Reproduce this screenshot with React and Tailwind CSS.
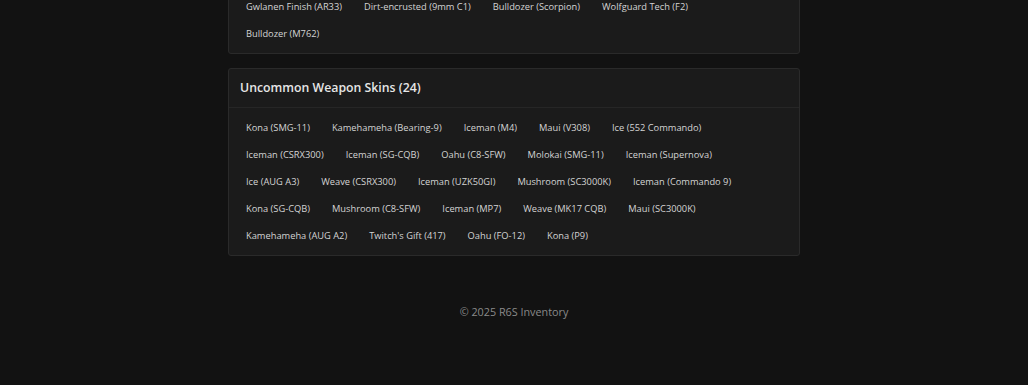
import React from "react";

const rareTail = [
  "Gwlanen Finish (AR33)",
  "Dirt-encrusted (9mm C1)",
  "Bulldozer (Scorpion)",
  "Wolfguard Tech (F2)",
  "Bulldozer (M762)",
];

const uncommon = [
  "Kona (SMG-11)",
  "Kamehameha (Bearing-9)",
  "Iceman (M4)",
  "Maui (V308)",
  "Ice (552 Commando)",
  "Iceman (CSRX300)",
  "Iceman (SG-CQB)",
  "Oahu (C8-SFW)",
  "Molokai (SMG-11)",
  "Iceman (Supernova)",
  "Ice (AUG A3)",
  "Weave (CSRX300)",
  "Iceman (UZK50GI)",
  "Mushroom (SC3000K)",
  "Iceman (Commando 9)",
  "Kona (SG-CQB)",
  "Mushroom (C8-SFW)",
  "Iceman (MP7)",
  "Weave (MK17 CQB)",
  "Maui (SC3000K)",
  "Kamehameha (AUG A2)",
  "Twitch's Gift (417)",
  "Oahu (FO-12)",
  "Kona (P9)",
];

const SkinList = ({ items }) => (
  <div className="flex flex-wrap gap-x-[22px] gap-y-[9px] px-[17px] pt-[11px] pb-[10px]">
    {items.map((name, i) => (
      <span key={i} className="h-[18px] leading-[18px] text-[9.3px] text-[#d4d4d4] whitespace-nowrap">
        {name}
      </span>
    ))}
  </div>
);

const App = () => {
  return (
    <div
      className="min-h-[385px] w-full bg-[#121212] overflow-hidden"
      style={{ fontFamily: "'Open Sans', 'Liberation Sans', sans-serif" }}
    >
      <div className="mx-auto w-[572px] flex flex-col gap-[14px]">
        <div className="-mt-[14px] bg-[#1b1b1b] border border-[#2a2a2a] rounded-[3px]">
          <SkinList items={rareTail} />
        </div>

        <div className="bg-[#1b1b1b] border border-[#2a2a2a] rounded-[3px]">
          <div className="h-[39px] flex items-center px-[11px] border-b border-[#262626]">
            <h2 className="text-[12.3px] font-semibold text-[#e6e6e6]">Uncommon Weapon Skins (24)</h2>
          </div>
          <SkinList items={uncommon} />
        </div>
      </div>

      <footer className="mt-[48px] text-center text-[10.8px] text-[#8a8a8a]">
        © 2025 R6S Inventory
      </footer>
    </div>
  );
};

export default App;
